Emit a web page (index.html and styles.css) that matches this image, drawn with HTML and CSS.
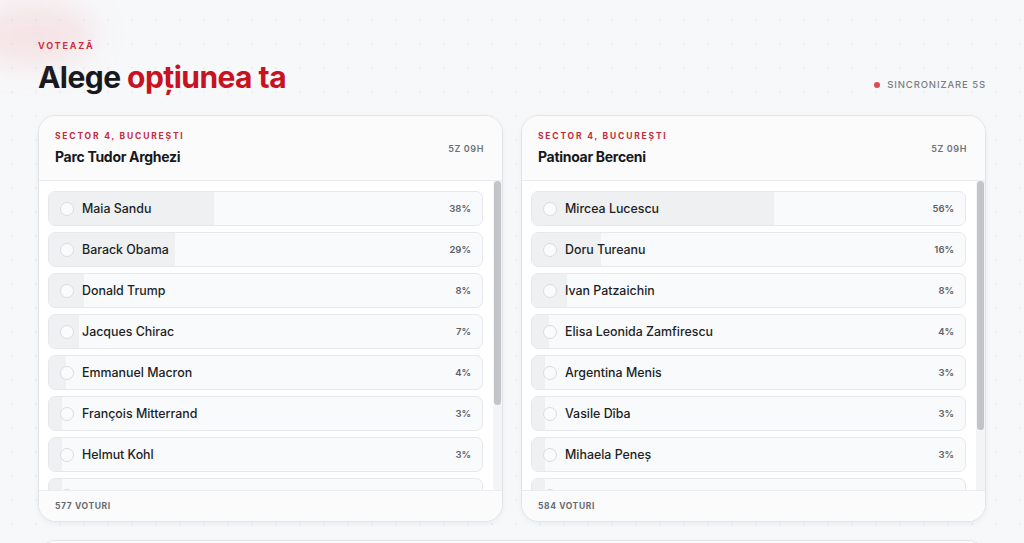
FILE: index.html
```html
<!DOCTYPE html>
<html lang="ro">
<head>
    <meta charset="UTF-8">
    <meta name="viewport" content="width=device-width, initial-scale=1.0">
    <title>Votează</title>
    <link rel="stylesheet" href="styles.css">
</head>
<body>

    <div class="glow"></div>

    <main class="page">
        <header class="page-head">
            <div>
                <div class="eyebrow">Votează</div>
                <h1>Alege <span class="accent">opțiunea ta</span></h1>
            </div>
            <div class="sync"><span class="sync-dot"></span>Sincronizare 5s</div>
        </header>

        <section class="polls">
            <article class="poll">
                <div class="poll-head">
                    <div>
                        <div class="poll-sector">Sector 4, București</div>
                        <h2 class="poll-title">Parc Tudor Arghezi</h2>
                    </div>
                    <div class="poll-time">5Z 09H</div>
                </div>
                <div class="list-wrap">
                    <ul class="options">
                        <li class="option"><span class="bar" style="width: 38%"></span><span class="radio"></span><span class="name">Maia Sandu</span><span class="pct">38%</span></li>
                        <li class="option"><span class="bar" style="width: 29%"></span><span class="radio"></span><span class="name">Barack Obama</span><span class="pct">29%</span></li>
                        <li class="option"><span class="bar" style="width: 8%"></span><span class="radio"></span><span class="name">Donald Trump</span><span class="pct">8%</span></li>
                        <li class="option"><span class="bar" style="width: 7%"></span><span class="radio"></span><span class="name">Jacques Chirac</span><span class="pct">7%</span></li>
                        <li class="option"><span class="bar" style="width: 4%"></span><span class="radio"></span><span class="name">Emmanuel Macron</span><span class="pct">4%</span></li>
                        <li class="option"><span class="bar" style="width: 3%"></span><span class="radio"></span><span class="name">François Mitterrand</span><span class="pct">3%</span></li>
                        <li class="option"><span class="bar" style="width: 3%"></span><span class="radio"></span><span class="name">Helmut Kohl</span><span class="pct">3%</span></li>
                        <li class="option"><span class="bar" style="width: 3%"></span><span class="radio"></span><span class="name">Angela Merkel</span><span class="pct">3%</span></li>
                        <li class="option"><span class="bar" style="width: 3%"></span><span class="radio"></span><span class="name">Margaret Thatcher</span><span class="pct">3%</span></li>
                        <li class="option"><span class="bar" style="width: 2%"></span><span class="radio"></span><span class="name">Václav Havel</span><span class="pct">2%</span></li>
                    </ul>
                    <div class="scroll-track"><div class="scroll-thumb" style="height: 224px"></div></div>
                </div>
                <div class="poll-foot">577 voturi</div>
            </article>

            <article class="poll">
                <div class="poll-head">
                    <div>
                        <div class="poll-sector">Sector 4, București</div>
                        <h2 class="poll-title">Patinoar Berceni</h2>
                    </div>
                    <div class="poll-time">5Z 09H</div>
                </div>
                <div class="list-wrap">
                    <ul class="options">
                        <li class="option"><span class="bar" style="width: 56%"></span><span class="radio"></span><span class="name">Mircea Lucescu</span><span class="pct">56%</span></li>
                        <li class="option"><span class="bar" style="width: 16%"></span><span class="radio"></span><span class="name">Doru Tureanu</span><span class="pct">16%</span></li>
                        <li class="option"><span class="bar" style="width: 8%"></span><span class="radio"></span><span class="name">Ivan Patzaichin</span><span class="pct">8%</span></li>
                        <li class="option"><span class="bar" style="width: 4%"></span><span class="radio"></span><span class="name">Elisa Leonida Zamfirescu</span><span class="pct">4%</span></li>
                        <li class="option"><span class="bar" style="width: 3%"></span><span class="radio"></span><span class="name">Argentina Menis</span><span class="pct">3%</span></li>
                        <li class="option"><span class="bar" style="width: 3%"></span><span class="radio"></span><span class="name">Vasile Dîba</span><span class="pct">3%</span></li>
                        <li class="option"><span class="bar" style="width: 3%"></span><span class="radio"></span><span class="name">Mihaela Peneș</span><span class="pct">3%</span></li>
                        <li class="option"><span class="bar" style="width: 3%"></span><span class="radio"></span><span class="name">Gheorghe Hagi</span><span class="pct">3%</span></li>
                        <li class="option"><span class="bar" style="width: 2%"></span><span class="radio"></span><span class="name">Nadia Comăneci</span><span class="pct">2%</span></li>
                    </ul>
                    <div class="scroll-track"><div class="scroll-thumb" style="height: 249px"></div></div>
                </div>
                <div class="poll-foot">584 voturi</div>
            </article>
        </section>

        <section class="poll poll-wide">
            <div class="poll-head">
                <div>
                    <div class="poll-sector">Sector 4, București</div>
                    <h2 class="poll-title">Parc Lumea Copiilor</h2>
                </div>
                <div class="poll-time">5Z 09H</div>
            </div>
        </section>
    </main>

</body>
</html>
```

FILE: styles.css
```css
body {
    font-family: Inter, "Noto Sans", Arial, sans-serif;
    margin: 0;
    padding: 0;
    color: #16181d;
    background-color: #f7f8fa;
    background-image: radial-gradient(circle, #eceef1 1px, transparent 1.6px);
    background-size: 24px 24px;
    background-position: 0 8px;
}

/* soft red blob in the corner */
.glow {
    position: absolute;
    top: 5px;
    left: -25px;
    width: 120px;
    height: 60px;
    border-radius: 50%;
    background: rgba(235, 120, 120, 0.16);
    filter: blur(16px);
    pointer-events: none;
}

.page {
    padding: 40px 38px 40px;
}

.page-head {
    display: flex;
    justify-content: space-between;
    align-items: flex-end;
    margin-bottom: 21px;
}

.eyebrow {
    font-size: 9px;
    font-weight: 700;
    letter-spacing: 1.8px;
    text-transform: uppercase;
    color: #c8283a;
    line-height: 11px;
}

h1 {
    font-size: 30px;
    font-weight: 700;
    letter-spacing: -0.55px;
    margin: 9px 0 0;
    line-height: 34px;
}

.accent {
    color: #c8121f;
}

.sync {
    display: flex;
    align-items: center;
    gap: 7px;
    font-size: 9.5px;
    font-weight: 500;
    letter-spacing: 0.9px;
    text-transform: uppercase;
    color: #7a7d84;
    margin-bottom: 4px;
}

.sync-dot {
    width: 6px;
    height: 6px;
    border-radius: 50%;
    background-color: #dd4b52;
}

.polls {
    display: grid;
    grid-template-columns: 1fr 1fr;
    gap: 18px;
}

.poll {
    background-color: white;
    border: 1px solid #e2e4e8;
    border-radius: 18px;
    box-shadow: 0px 2px 6px rgba(0, 0, 0, 0.05);
    overflow: hidden;
}

.poll-head {
    display: flex;
    justify-content: space-between;
    align-items: center;
    height: 64px;
    padding: 0 18px 0 16px;
    background-color: #fbfbfc;
    border-bottom: 1px solid #ebecef;
}

.poll-sector {
    font-size: 8.5px;
    font-weight: 700;
    letter-spacing: 1.8px;
    text-transform: uppercase;
    color: #c8283a;
    line-height: 11px;
}

.poll-title {
    font-size: 14px;
    font-weight: 700;
    letter-spacing: -0.3px;
    margin: 6px 0 0;
    line-height: 17px;
}

.poll-time {
    font-size: 9px;
    font-weight: 600;
    letter-spacing: 0.6px;
    color: #6f7279;
}

.list-wrap {
    display: flex;
    height: 309px;
}

.options {
    flex: 1;
    list-style: none;
    margin: 0;
    padding: 10px 10px 10px 9px;
    overflow: hidden;
    display: flex;
    flex-direction: column;
    gap: 6px;
}

.scroll-track {
    width: 9px;
    background-color: #f3f4f6;
}

.scroll-thumb {
    margin: 0 1px;
    background-color: #c3c4c8;
    border-radius: 4px;
}

.option {
    position: relative;
    flex: 0 0 auto;
    display: flex;
    align-items: center;
    height: 33px;
    padding: 0 11px 0 11px;
    background-color: #f9fafb;
    border: 1px solid #e7e8eb;
    border-radius: 7px;
    overflow: hidden;
}

.bar {
    position: absolute;
    top: 0;
    left: 0;
    bottom: 0;
    background-color: #eff0f2;
}

.radio {
    position: relative;
    width: 12px;
    height: 12px;
    border: 1px solid #dadce0;
    border-radius: 50%;
    background-color: #fbfbfc;
    margin-right: 8px;
}

.name {
    position: relative;
    flex: 1;
    font-size: 12.4px;
    font-weight: 500;
    color: #1d1f24;
}

.pct {
    position: relative;
    font-size: 9.5px;
    font-weight: 600;
    color: #5d6067;
}

.poll-foot {
    height: 30px;
    display: flex;
    align-items: center;
    padding: 0 16px;
    background-color: #fbfbfc;
    border-top: 1px solid #ebecef;
    font-size: 8.5px;
    font-weight: 700;
    letter-spacing: 0.6px;
    text-transform: uppercase;
    color: #676a71;
}

.poll-wide {
    margin-top: 18px;
}
```
